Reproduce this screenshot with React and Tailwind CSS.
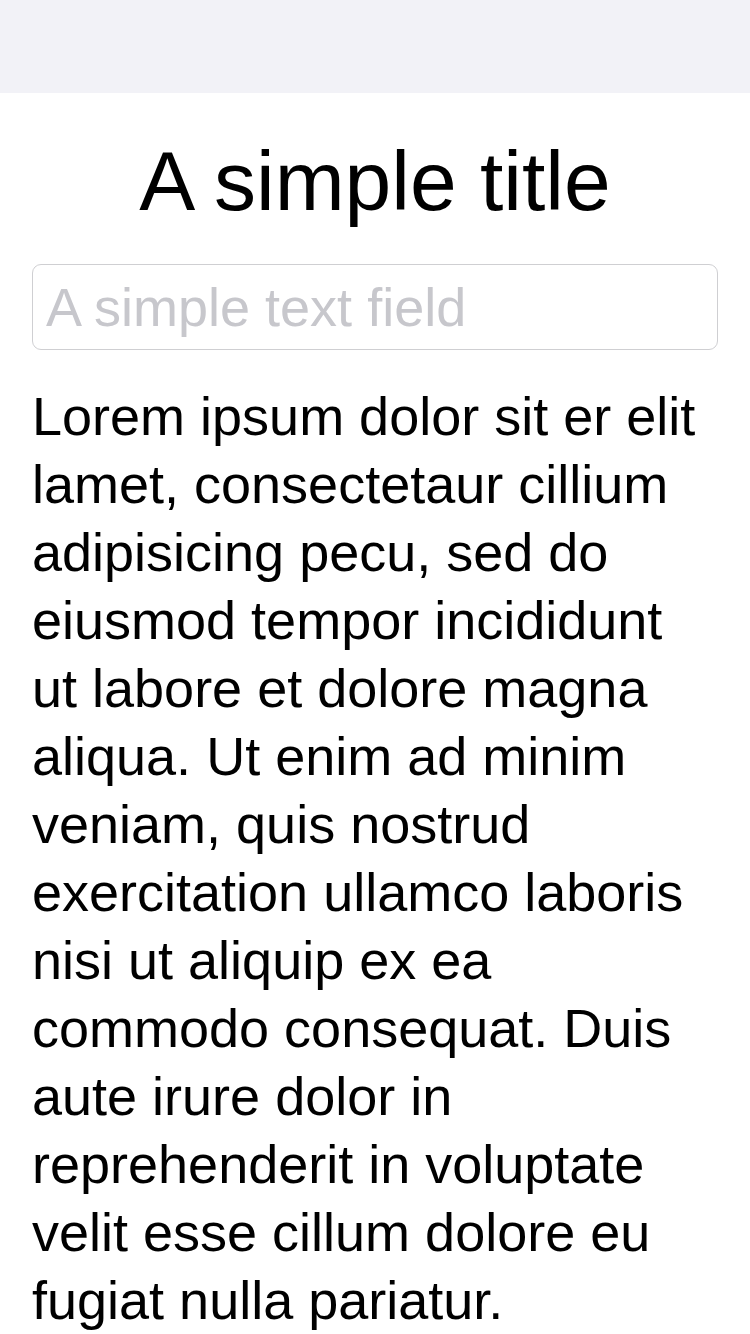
const lines = [
  'Lorem ipsum dolor sit er elit',
  'lamet, consectetaur cillium',
  'adipisicing pecu, sed do',
  'eiusmod tempor incididunt',
  'ut labore et dolore magna',
  'aliqua. Ut enim ad minim',
  'veniam, quis nostrud',
  'exercitation ullamco laboris',
  'nisi ut aliquip ex ea',
  'commodo consequat. Duis',
  'aute irure dolor in',
  'reprehenderit in voluptate',
  'velit esse cillum dolore eu',
  'fugiat nulla pariatur.',
];

const App = () => (
  <div className="min-h-[1334px] w-[750px] bg-white font-['Liberation_Sans',Arial,sans-serif] text-black overflow-hidden">
    <div className="h-[93px] bg-[#f2f2f7]" />
    <div className="px-8 pt-[38px]">
      <h1 className="text-center text-[84px] leading-[100px] font-normal">A simple title</h1>
      <input
        type="text"
        placeholder="A simple text field"
        className="mt-[33px] block w-full h-[86px] rounded-[9px] border border-[#cfcfd2] px-[13px] text-[54px] outline-none placeholder:text-[#c7c7cc]"
      />
      <div className="mt-[32px] text-[54px] leading-[68px]">
        {lines.map((l) => (
          <div key={l} className="whitespace-nowrap">{l}</div>
        ))}
      </div>
    </div>
  </div>
);

export default App;
